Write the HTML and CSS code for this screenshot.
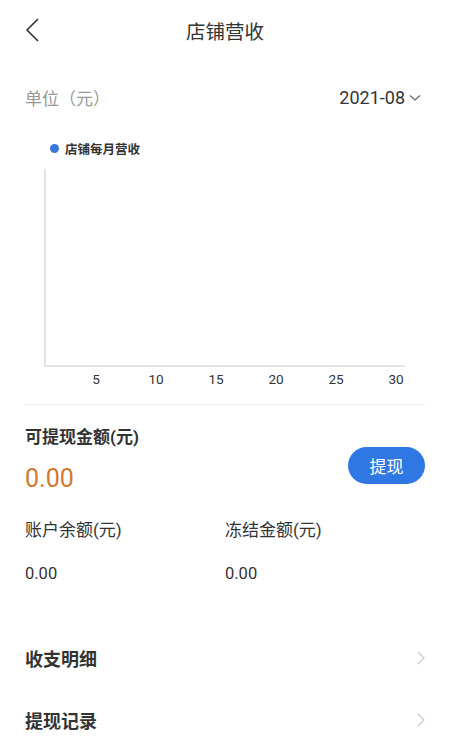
FILE: index.html
```html
<!DOCTYPE html>
<html>
<head>
<meta charset="utf-8">
<title>店铺营收</title>
<link rel="stylesheet" href="styles.css">
</head>

<body>

<section class="header">
  <span class="back">
    <svg width="16" height="26" viewBox="0 0 16 26"><path d="M13 2 L2 13 L13 24" fill="none" stroke="#333" stroke-width="1.6"/></svg>
  </span>
  <h2>店铺营收</h2>
  <span></span>
</section>

<section class="content">
  <div class="unit-bar">
    <span class="unit">单位（元）</span>
    <span class="month">2021-08
      <svg width="12" height="8" viewBox="0 0 12 8"><path d="M1 1.5 L6 6 L11 1.5" fill="none" stroke="#666" stroke-width="1.2"/></svg>
    </span>
  </div>

  <div class="legend"><i class="dot"></i>店铺每月营收</div>

  <div class="chart">
    <div class="plot"></div>
    <div class="x-labels">
      <span>5</span><span>10</span><span>15</span><span>20</span><span>25</span><span>30</span>
    </div>
  </div>

  <div class="withdraw">
    <div>
      <h3>可提现金额(元)</h3>
      <p class="amount">0.00</p>
    </div>
    <button type="button">提现</button>
  </div>

  <div class="balances">
    <div>
      <p class="label">账户余额(元)</p>
      <p class="value">0.00</p>
    </div>
    <div>
      <p class="label">冻结金额(元)</p>
      <p class="value">0.00</p>
    </div>
  </div>

  <ul class="links">
    <li>收支明细
      <svg width="8" height="14" viewBox="0 0 8 14"><path d="M1 1 L7 7 L1 13" fill="none" stroke="#c8c8c8" stroke-width="1.2"/></svg>
    </li>
    <li>提现记录
      <svg width="8" height="14" viewBox="0 0 8 14"><path d="M1 1 L7 7 L1 13" fill="none" stroke="#c8c8c8" stroke-width="1.2"/></svg>
    </li>
  </ul>
</section>

</body>
</html>
```

FILE: styles.css
```css
body {
  background-color: #fff;
  color: #333;
  font-family: Roboto, 'Noto Sans CJK SC', sans-serif;
  margin: 0;
  padding: 0;
}

h2,
h3,
ul,
li,
p {
  margin: 0;
  padding: 0;
}
ul {
  list-style-type: none;
}


/* Top bar */
.header {
  align-items: center;
  display: grid;
  grid-template-columns: 40px 1fr 40px;
  height: 60px;
  padding: 0 25px;
}
.header .back {
  display: flex;
}
.header h2 {
  color: #333;
  font-size: 19.5px;
  font-weight: normal;
  text-align: center;
}


/* Main content */
.content {
  padding: 0 25px;
}

.unit-bar {
  align-items: center;
  display: flex;
  justify-content: space-between;
  margin-top: 25px;
}
.unit {
  color: #999;
  font-size: 17px;
}
.month {
  align-items: center;
  display: flex;
  font-size: 18px;
  gap: 4px;
  padding-right: 4px;
}

.legend {
  align-items: center;
  display: flex;
  font-size: 12.5px;
  font-weight: bold;
  gap: 6px;
  margin: 29px 0 0 25px;
}
.legend .dot {
  background-color: #3776dc;
  border-radius: 50%;
  height: 9px;
  width: 9px;
}

/* Chart: 30 days, 12px per day */
.chart {
  border-bottom: 1px solid #eee;
  padding: 11px 20px 17px 19px;
}
.plot {
  border-bottom: 2px solid #e2e2e2;
  border-left: 2px solid #e2e2e2;
  height: 196px;
}
.x-labels {
  display: grid;
  font-size: 13.5px;
  grid-template-columns: repeat(6, 60px);
  margin-top: 4px;
  padding-left: 22px;
  text-align: center;
}

.withdraw {
  align-items: center;
  display: flex;
  justify-content: space-between;
  padding-top: 18px;
}
.withdraw h3 {
  font-size: 17px;
  font-weight: bold;
}
.amount {
  color: #d2782f;
  font-size: 25px;
  margin-top: 16px;
}
.withdraw button {
  background-color: #2f78e4;
  border: 0;
  border-radius: 19px;
  color: #fff;
  font-family: inherit;
  font-size: 17px;
  height: 37px;
  margin-top: 15px;
  width: 77px;
}

.balances {
  display: grid;
  grid-template-columns: 200px 1fr;
  margin-top: 23px;
}
.balances .label {
  font-size: 17px;
}
.balances .value {
  font-size: 16.5px;
  margin-top: 23px;
}

.links {
  margin-top: 44px;
}
.links li {
  align-items: center;
  display: flex;
  font-size: 18px;
  font-weight: bold;
  height: 62px;
  justify-content: space-between;
}
```
